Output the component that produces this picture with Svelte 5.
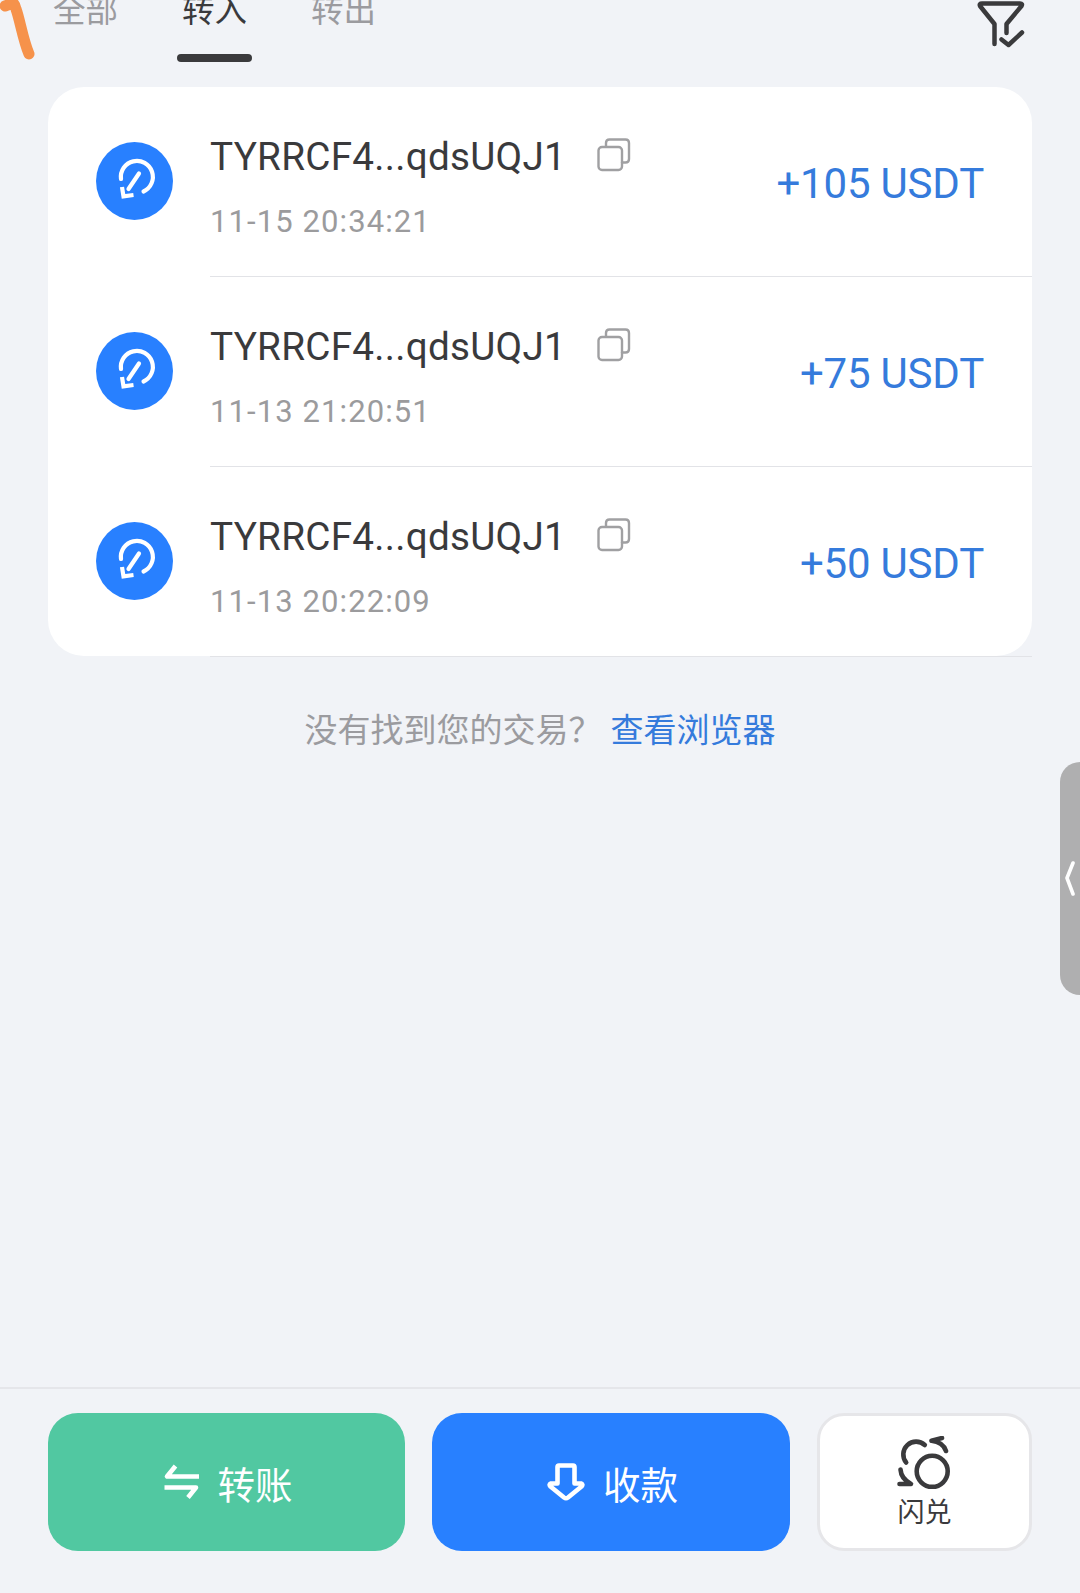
<script>
    let tabs = ['全部', '转入', '转出'];
    let active = $state('转入');

    const transfers = [
        { address: 'TYRRCF4...qdsUQJ1', time: '11-15 20:34:21', amount: '+105 USDT' },
        { address: 'TYRRCF4...qdsUQJ1', time: '11-13 21:20:51', amount: '+75 USDT' },
        { address: 'TYRRCF4...qdsUQJ1', time: '11-13 20:22:09', amount: '+50 USDT' }
    ];
</script>

<div class="page">
    <svg class="scribble" viewBox="0 0 40 64">
        <path d="M5 6 L13 3 Q15 4 16 9 C20 20 23 40 29 54" />
    </svg>

    <header>
        <nav>
            {#each tabs as tab}
                <button class="tab" class:active={tab == active} onclick={() => active = tab}>{tab}</button>
            {/each}
        </nav>
        <svg class="filter" viewBox="0 0 48 48">
            <path d="M17.500 44 V24 L3 6 Q2 3.500 5 3.500 H43 Q46 3.500 44.500 6 L29.500 24 V33" />
            <path d="M24.500 39.500 L31.500 45 L45 32.500" />
        </svg>
    </header>

    <main>
        <div class="card">
            {#each transfers as item}
                <div class="row">
                    <div class="badge">
                        <svg viewBox="0 0 77 78">
                            <path d="M25 37 A16 16 0 1 1 47.500 49.500" />
                            <path d="M43 31.500 L32.500 47" />
                            <path class="head" d="M26 45 L27.500 54.300 L37.500 53" />
                        </svg>
                    </div>
                    <div class="info">
                        <div class="line">
                            <div class="address">
                                <span>{item.address}</span>
                                <svg class="copy" viewBox="0 0 34 34">
                                    <path d="M9 8 V5 Q9 1.500 12.500 1.500 H28.500 Q32 1.500 32 5 V21 Q32 24.500 28.500 24.500 H25" />
                                    <rect x="1.500" y="9" width="23.500" height="23" rx="3.500" />
                                </svg>
                            </div>
                            <div class="time">{item.time}</div>
                        </div>
                        <div class="amount">{item.amount}</div>
                    </div>
                </div>
            {/each}
        </div>

        <p class="hint">
            <span>没有找到您的交易？</span>
            <a href="#explorer">查看浏览器</a>
        </p>
    </main>

    <div class="handle">
        <svg viewBox="0 0 10 36">
            <path d="M8 2 L2 17 L8 33" />
        </svg>
    </div>

    <footer>
        <button class="action send">
            <svg viewBox="0 0 38 38">
                <path d="M13.500 3 L5 13.500 H37" />
                <path d="M2.500 24.500 H34 L26 34.500" />
            </svg>
            <span>转账</span>
        </button>
        <button class="action receive">
            <svg viewBox="0 0 38 38">
                <path d="M12 2.500 H26 Q27.500 2.500 27.500 4 V20.500 H34 Q36.500 21.500 34.500 23.500 L21 34.500 Q19 36 17 34.500 L3.500 23.500 Q1.500 21.500 4 20.500 H10.500 V4 Q10.500 2.500 12 2.500 Z" />
            </svg>
            <span>收款</span>
        </button>
        <button class="swap">
            <svg viewBox="0 0 54 54">
                <circle cx="35.200" cy="35.300" r="15.500" />
                <path d="M9.200 26.500 A12.800 12.800 0 0 1 27.800 9" />
                <path d="M45 2 L34.500 4.800 Q46 6 49 15" />
                <path d="M3.500 33.500 Q4 42.500 14 48 H2.500" />
            </svg>
            <span>闪兑</span>
        </button>
    </footer>
</div>

<style>
:global(body) {
    margin: 0;
    background: #f1f3f7;
}

.page {
    position: relative;
    display: flex;
    flex-direction: column;
    height: 1593px;
    overflow: hidden;
    background: #f1f3f7;
    font-family: Roboto, "Noto Sans CJK SC", sans-serif;
    color: #3a3a3c;
}

svg {
    display: block;
    fill: none;
    stroke: currentColor;
    stroke-linecap: round;
    stroke-linejoin: round;
}

button {
    padding: 0;
    border: 0;
    background: none;
    font: inherit;
    color: inherit;
}

header {
    display: flex;
    justify-content: space-between;
    height: 87px;
    padding: 0 55px 0 48px;
}

nav {
    display: flex;
    align-items: flex-start;
    gap: 54px;
}

.tab {
    width: 75px;
    height: 62px;
    display: flex;
    flex-direction: column;
    justify-content: space-between;
    align-items: center;
    font-family: "Noto Sans CJK SC", sans-serif;
    font-size: 32.5px;
    line-height: 16px;
    color: #9b9b9f;
}

.tab.active {
    color: #3a3a3c;
}

.tab.active::after {
    content: '';
    width: 75px;
    height: 8px;
    border-radius: 4px;
    background: #3a3a3c;
}

.filter {
    width: 48px;
    height: 48px;
    stroke: #3a3a3c;
    stroke-width: 4.5;
}

/* pen mark at the screen edge */
.scribble {
    position: absolute;
    top: 0;
    left: 0;
    width: 40px;
    height: 64px;
    stroke: #f6924b;
    stroke-width: 11;
}

main {
    flex: 1;
}

.card {
    height: 569px;
    margin: 0 48px;
    border-radius: 36px;
    background: #fff;
}

.row {
    display: flex;
    height: 190px;
    padding-left: 48px;
}

.badge {
    width: 77px;
    height: 78px;
    margin: 55px 37px 0 0;
    border-radius: 50%;
    background: #2880ff;
    color: #fff;
}

.badge svg {
    width: 77px;
    height: 78px;
    stroke-width: 4.2;
}

.badge .head {
    stroke-linecap: butt;
    stroke-linejoin: miter;
}

.info {
    flex: 1;
    display: flex;
    justify-content: space-between;
    box-sizing: border-box;
    border-bottom: 1px solid #e2e3e7;
    padding-right: 48px;
}

.address {
    display: flex;
    align-items: center;
    justify-content: space-between;
    width: 421px;
    margin-top: 46px;
    height: 48px;
    font-size: 38.7px;
    line-height: 48px;
    letter-spacing: 0.25px;
    white-space: nowrap;
}

.copy {
    width: 34px;
    height: 34px;
    margin-top: -5px;
    color: #a0a0a2;
    stroke-width: 2.4;
}

.time {
    margin-top: 21px;
    font-size: 31px;
    line-height: 40px;
    letter-spacing: 1.1px;
    color: #9b9b9d;
}

.amount {
    margin-top: 72px;
    font-size: 42px;
    line-height: 50px;
    letter-spacing: -0.2px;
    color: #357bdc;
    white-space: nowrap;
}

.hint {
    display: flex;
    justify-content: center;
    gap: 9px;
    margin: 48px 0 0;
    font-family: "Noto Sans CJK SC", sans-serif;
    font-size: 33px;
    line-height: 48px;
    color: #9b9b9f;
}

.hint a {
    color: #357bdc;
    text-decoration: none;
}

/* system side panel handle, floats over the page */
.handle {
    position: absolute;
    top: 762px;
    right: 0;
    display: flex;
    align-items: center;
    box-sizing: border-box;
    width: 20px;
    height: 233px;
    padding-left: 5px;
    border-radius: 20px 0 0 20px;
    background: #afafb0;
    color: #fff;
}

.handle svg {
    width: 10px;
    height: 36px;
    stroke-width: 3.6;
}

footer {
    display: grid;
    grid-template-columns: 357px 358px 215px;
    gap: 27px;
    box-sizing: border-box;
    height: 206px;
    padding: 24px 48px 42px;
    border-top: 2px solid #e5e6ea;
    font-family: "Noto Sans CJK SC", sans-serif;
}

.action {
    display: flex;
    align-items: center;
    justify-content: center;
    gap: 18px;
    box-sizing: border-box;
    height: 138px;
    padding-left: 3px;
    border-radius: 30px;
    font-size: 37.5px;
    line-height: 50px;
    color: #fff;
}

.action span {
    padding-top: 1px;
}

.action svg {
    width: 38px;
    height: 38px;
    stroke-width: 4.6;
}

.send {
    padding-left: 1px;
    background: #51c8a1;
}

.send svg {
    stroke-linecap: butt;
}

.receive {
    background: #2880ff;
}

.swap {
    display: flex;
    flex-direction: column;
    align-items: center;
    box-sizing: border-box;
    height: 138px;
    padding-top: 20px;
    border: 3px solid #e6e6e9;
    border-radius: 27px;
    background: #fff;
    font-size: 27px;
    line-height: 42px;
}

.swap svg {
    width: 54px;
    height: 54px;
    margin-left: -2px;
    stroke-width: 4.6;
}
</style>
